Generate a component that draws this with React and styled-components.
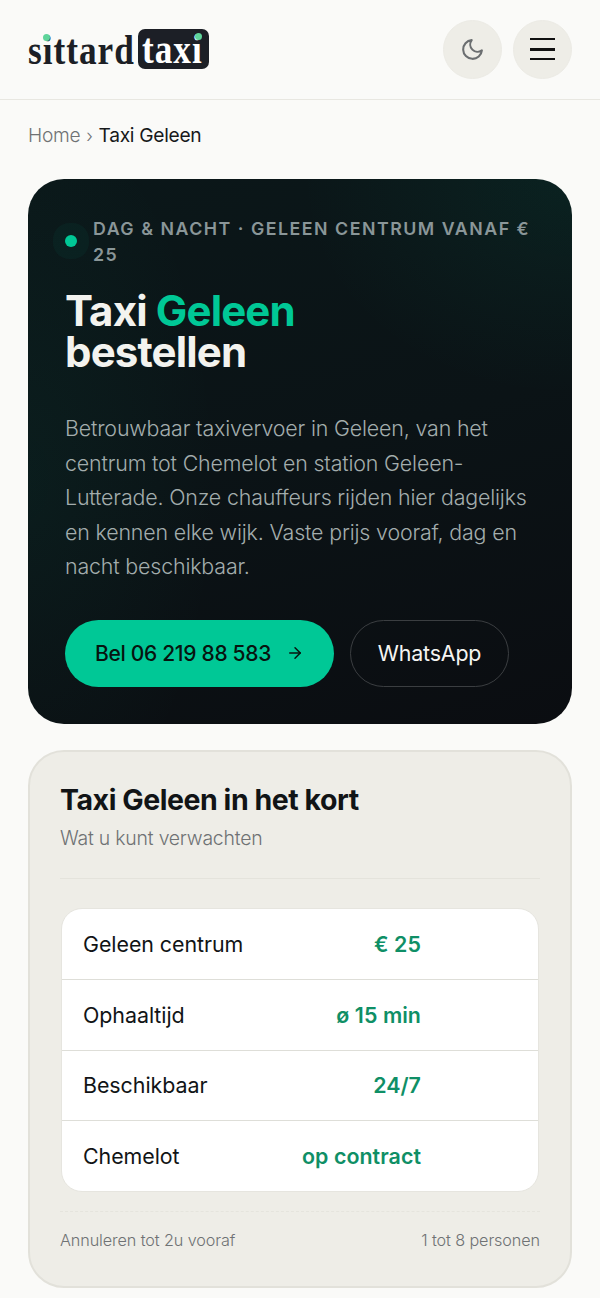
import React from "react";
import styled, { createGlobalStyle } from "styled-components";
import { ArrowRight } from "lucide-react";

const Global = createGlobalStyle`
  html, body { margin: 0; padding: 0; background: #fafaf8; }
  * { box-sizing: border-box; }
  body { font-family: Inter, "Noto Sans", sans-serif; color: #111416; height: 1298px; overflow: hidden; }
`;
const Header = styled.header`
  height: 100px; padding: 0 28px 1px; display: flex; align-items: center; justify-content: space-between;
  border-bottom: 1.5px solid #e8e7e1;
`;
const Logo = styled.div`
  display: flex; align-items: center; gap: 6px; font-family: "Liberation Serif", serif;
  font-weight: 700; font-size: 43px; line-height: 40px; color: #1c1f26;
`;
const LogoWord = styled.span`position: relative; display: block; width: 104px; height: 40px;`;
const WordText = styled.span`display: block; transform: scaleX(.82); transform-origin: left; letter-spacing: 1.2px; margin-top: ${p => p.$t}px; white-space: nowrap;`;
const LogoBadge = styled.span`
  position: relative; display: block; width: 71px; height: 40px; border-radius: 7px; background: #1c1f26; color: #fff; padding-left: 4px;
`;
const LogoDot = styled.i`
  position: absolute; border-radius: 50%; background: #5ed49a; width: 7px; height: 7px; left: ${p => p.$l}px; top: ${p => p.$t}px;
`;
const Actions = styled.div`display: flex; gap: 11px;`;
const RoundButton = styled.button`
  width: 59px; height: 59px; border-radius: 50%; border: 1px solid #ecebe5; background: #eeede7; color: #6b6e70; padding: 0;
  display: flex; flex-direction: column; align-items: center; justify-content: center; gap: 7.5px;
`;
const MenuBar = styled.span`display: block; width: 25px; height: ${p => p.$h}px; background: #111;`;
const Crumbs = styled.nav`display: flex; align-items: center; height: 70px; padding: 0 28px 0; font-size: 19.2px; font-weight: 300; color: #6f7274; letter-spacing: -0.3px;`;
const CrumbSep = styled.span`margin: 0 6px; font-size: 18px;`;
const CrumbNow = styled.span`color: #17191b; font-weight: 400;`;
const Main = styled.main`padding: 9px 28px 0; display: flex; flex-direction: column; gap: 26px;`;
const Hero = styled.section`
  height: 545px; border-radius: 36px; padding: 37px 37px; color: #f3f3ef;
  background:
    radial-gradient(ellipse 50% 40% at 100% 0%, rgba(0,200,150,.07), rgba(0,200,150,0) 100%),
    radial-gradient(ellipse 35% 70% at 0% 55%, rgba(0,200,150,.05), rgba(0,200,150,0) 100%),
    linear-gradient(165deg, #0b1719 0%, #0b1316 50%, #0b0d11 100%);
`;
const Eyebrow = styled.div`position: relative; margin-left: 28px; font-size: 17.8px; line-height: 26px; font-weight: 600; letter-spacing: 1.5px; color: #8a9698; text-transform: uppercase;`;
const EyeDot = styled.i`
  position: absolute; left: -28px; top: 19px; width: 12px; height: 12px; border-radius: 50%; background: #00c896; box-shadow: 0 0 0 12px rgba(0,200,150,.05);
`;
const Title = styled.h1`margin: 22px 0 0; font-size: 42px; line-height: 41px; font-weight: 700; letter-spacing: -0.85px;`;
const Accent = styled.span`color: #00c896;`;
const Lead = styled.p`margin: 39px 0 0; font-size: 21.4px; line-height: 34.6px; font-weight: 300; color: #a3adad; letter-spacing: -0.16px;`;
const Buttons = styled.div`display: flex; gap: 16px; margin-top: 36px;`;
const Primary = styled.a`
  width: 269px; height: 67px; border-radius: 34px; background: #00c896; color: #07140f; display: flex; align-items: center; justify-content: center; gap: 15px;
  font-size: 21px; font-weight: 500; letter-spacing: -0.3px;
`;
const Secondary = styled.a`
  width: 159px; height: 67px; border-radius: 34px; border: 1.5px solid #3b3e41; color: #f5f5f2; display: flex; align-items: center; justify-content: center;
  font-size: 21.4px; font-weight: 400; letter-spacing: -0.15px;
`;
const Card = styled.section`height: 538px; border-radius: 36px; background: #eeede7; border: 2px solid #e2e1da; padding: 30px 30px;`;
const CardTitle = styled.h2`margin: 0; font-size: 28.5px; line-height: 36px; font-weight: 700; letter-spacing: -0.45px;`;
const CardSub = styled.p`margin: 7px 0 0; font-size: 19.4px; line-height: 26px; font-weight: 300; color: #6f7274; letter-spacing: -0.2px;`;
const Rule = styled.hr`margin: 27px 0 29px; border: 0; border-top: 1.5px solid #e4e3dc;`;
const Table = styled.div`margin: 0 1px; border-radius: 21px; background: #fff; border: 1px solid #e6e5df; overflow: hidden;`;
const Row = styled.div`
  height: 70.4px; display: grid; grid-template-columns: 1fr 138px; padding: 0 117px 0 21px; align-items: center;
  & + & { border-top: 1.5px solid #deded8; }
`;
const RowLabel = styled.span`font-size: 21.4px; font-weight: 400; color: #111416; letter-spacing: -0.05px;`;
const RowValue = styled.span`font-size: 21.4px; font-weight: 600; color: #0f8f66; text-align: right; white-space: nowrap; letter-spacing: 0.05px; direction: rtl;`;
const Foot = styled.div`
  margin-top: 19px; padding-top: 17px; border-top: 1.5px dashed #e5e4dd; display: flex; justify-content: space-between;
  font-size: 16.2px; line-height: 22px; font-weight: 300; color: #6f7274; letter-spacing: -0.1px;
`;

const rows = [["Geleen centrum", "€ 25"], ["Ophaaltijd", "ø 15 min"], ["Beschikbaar", "24/7"], ["Chemelot", "op contract"]];

export default function App() {
  return (
    <>
      <Global />
      <Header>
        <Logo>
          <LogoWord><WordText $t={1}>sittard</WordText><LogoDot $l={15} $t={5} /></LogoWord>
          <LogoBadge><WordText $t={0}>taxi</WordText><LogoDot $l={57} $t={4} /></LogoBadge>
        </Logo>
        <Actions>
          <RoundButton aria-label="Thema">
            <svg width="25" height="25" viewBox="0 0 24 24" fill="none" stroke="currentColor" strokeWidth="2" strokeLinecap="round" strokeLinejoin="round">
              <path d="M21 12.79A9 9 0 1 1 11.21 3 7 7 0 0 0 21 12.79z" />
            </svg>
          </RoundButton>
          <RoundButton aria-label="Menu"><MenuBar $h={2} /><MenuBar $h={3} /><MenuBar $h={2} /></RoundButton>
        </Actions>
      </Header>
      <Crumbs>Home<CrumbSep>›</CrumbSep><CrumbNow>Taxi Geleen</CrumbNow></Crumbs>
      <Main>
        <Hero>
          <Eyebrow><EyeDot />Dag &amp; nacht · Geleen centrum vanaf € 25</Eyebrow>
          <Title>Taxi <Accent>Geleen</Accent><br />bestellen</Title>
          <Lead>Betrouwbaar taxivervoer in Geleen, van het centrum tot Chemelot en station Geleen-Lutterade. Onze chauffeurs rijden hier dagelijks en kennen elke wijk. Vaste prijs vooraf, dag en nacht beschikbaar.</Lead>
          <Buttons>
            <Primary>Bel 06 219 88 583<ArrowRight size={18} strokeWidth={2} /></Primary>
            <Secondary>WhatsApp</Secondary>
          </Buttons>
        </Hero>
        <Card>
          <CardTitle>Taxi Geleen in het kort</CardTitle>
          <CardSub>Wat u kunt verwachten</CardSub>
          <Rule />
          <Table>
            {rows.map(([l, v]) => (
              <Row key={l}><RowLabel>{l}</RowLabel><RowValue><bdi>{v}</bdi></RowValue></Row>
            ))}
          </Table>
          <Foot><span>Annuleren tot 2u vooraf</span><span>1 tot 8 personen</span></Foot>
        </Card>
      </Main>
    </>
  );
}
